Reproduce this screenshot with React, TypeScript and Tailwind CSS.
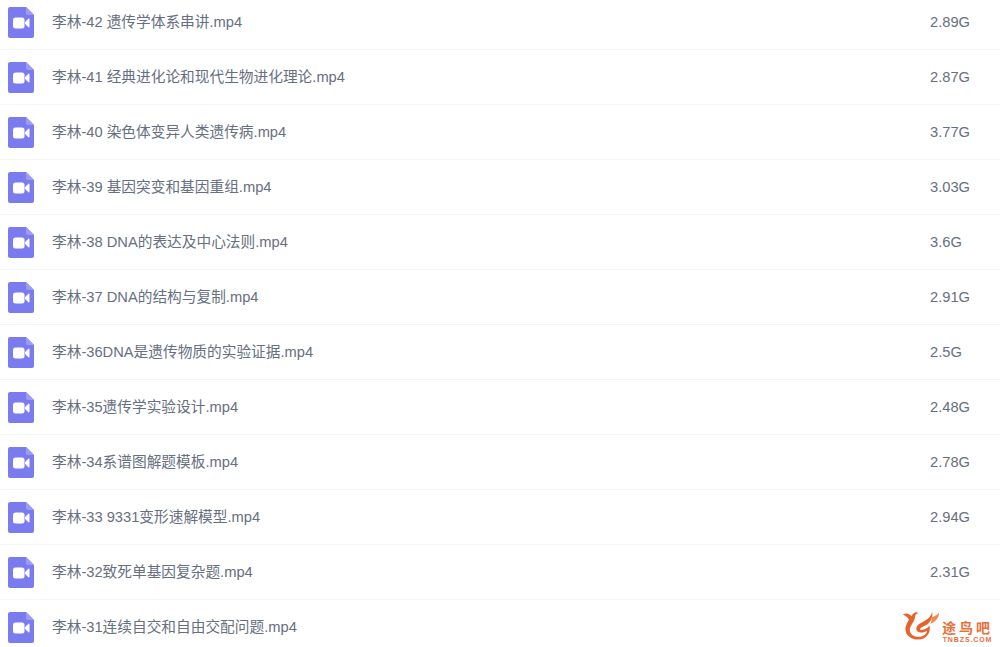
const files = [
  { name: "李林-42 遗传学体系串讲.mp4", size: "2.89G" },
  { name: "李林-41 经典进化论和现代生物进化理论.mp4", size: "2.87G" },
  { name: "李林-40 染色体变异人类遗传病.mp4", size: "3.77G" },
  { name: "李林-39 基因突变和基因重组.mp4", size: "3.03G" },
  { name: "李林-38 DNA的表达及中心法则.mp4", size: "3.6G" },
  { name: "李林-37 DNA的结构与复制.mp4", size: "2.91G" },
  { name: "李林-36DNA是遗传物质的实验证据.mp4", size: "2.5G" },
  { name: "李林-35遗传学实验设计.mp4", size: "2.48G" },
  { name: "李林-34系谱图解题模板.mp4", size: "2.78G" },
  { name: "李林-33 9331变形速解模型.mp4", size: "2.94G" },
  { name: "李林-32致死单基因复杂题.mp4", size: "2.31G" },
  { name: "李林-31连续自交和自由交配问题.mp4", size: "" },
];

const VideoFileIcon = () => (
  <svg width="26" height="31" viewBox="0 0 26 31" className="shrink-0">
    <path d="M2 0H18L26 8V29a2 2 0 0 1-2 2H2a2 2 0 0 1-2-2V2a2 2 0 0 1 2-2Z" fill="#7b7bf0" />
    <path d="M18 0L26 8H20a2 2 0 0 1-2-2Z" fill="#9c9cf5" />
    <rect x="5" y="10.5" width="11.5" height="11" rx="2.5" fill="#fff" />
    <path d="M17.5 15L21 11.8V20.2L17.5 17Z" fill="#fff" stroke="#fff" strokeLinejoin="round" />
  </svg>
);

const Watermark = () => (
  <div className="absolute left-[900px] top-[610px] flex items-start">
    <svg width="42" height="31" viewBox="0 0 44 36">
      <path d="M1 5C5 3 8 4 11 7C13 3 17 1 19 4C16 4 15 6 15 9C14 14 9 19 9 23C9 29 15 32 21 31C26 30 29 27 29 24C26 26 21 27 18 25C15 22 17 17 22 15C27 12 33 10 35 2C36 9 33 15 27 18C23 20 20 21 21 23C24 24 30 21 32 18C33 24 31 30 25 33C18 36 9 34 5 27C2 21 6 15 8 11C6 8 4 7 1 5Z" fill="#e8622c" />
      <path d="M34 8C38 8 41 6 43 3C43 9 39 14 33 16C34 13 35 11 34 8Z" fill="#f08a4e" />
    </svg>
    <div className="mt-[10px] flex flex-col items-center text-[#e8703c]">
      <span className="text-[14px] font-bold leading-[16px] tracking-[3px]">途鸟吧</span>
      <span className="text-[7px] font-bold leading-[8px] tracking-[0.9px]">TNBZS.COM</span>
    </div>
  </div>
);

export default function App() {
  return (
    <div className="relative h-[647px] w-[1000px] overflow-hidden bg-white font-['Liberation_Sans','Noto_Sans_CJK_SC',sans-serif] text-[14.7px] text-[#666f80]">
      <ul className="-mt-[5px]">
        {files.map((file) => (
          <li key={file.name} className="flex h-[55px] items-center border-b border-[#f4f5f7] pl-2">
            <VideoFileIcon />
            <span className="ml-[18px] flex-1">{file.name}</span>
            <span className="w-[70px]">{file.size}</span>
          </li>
        ))}
      </ul>
      <Watermark />
    </div>
  );
}
